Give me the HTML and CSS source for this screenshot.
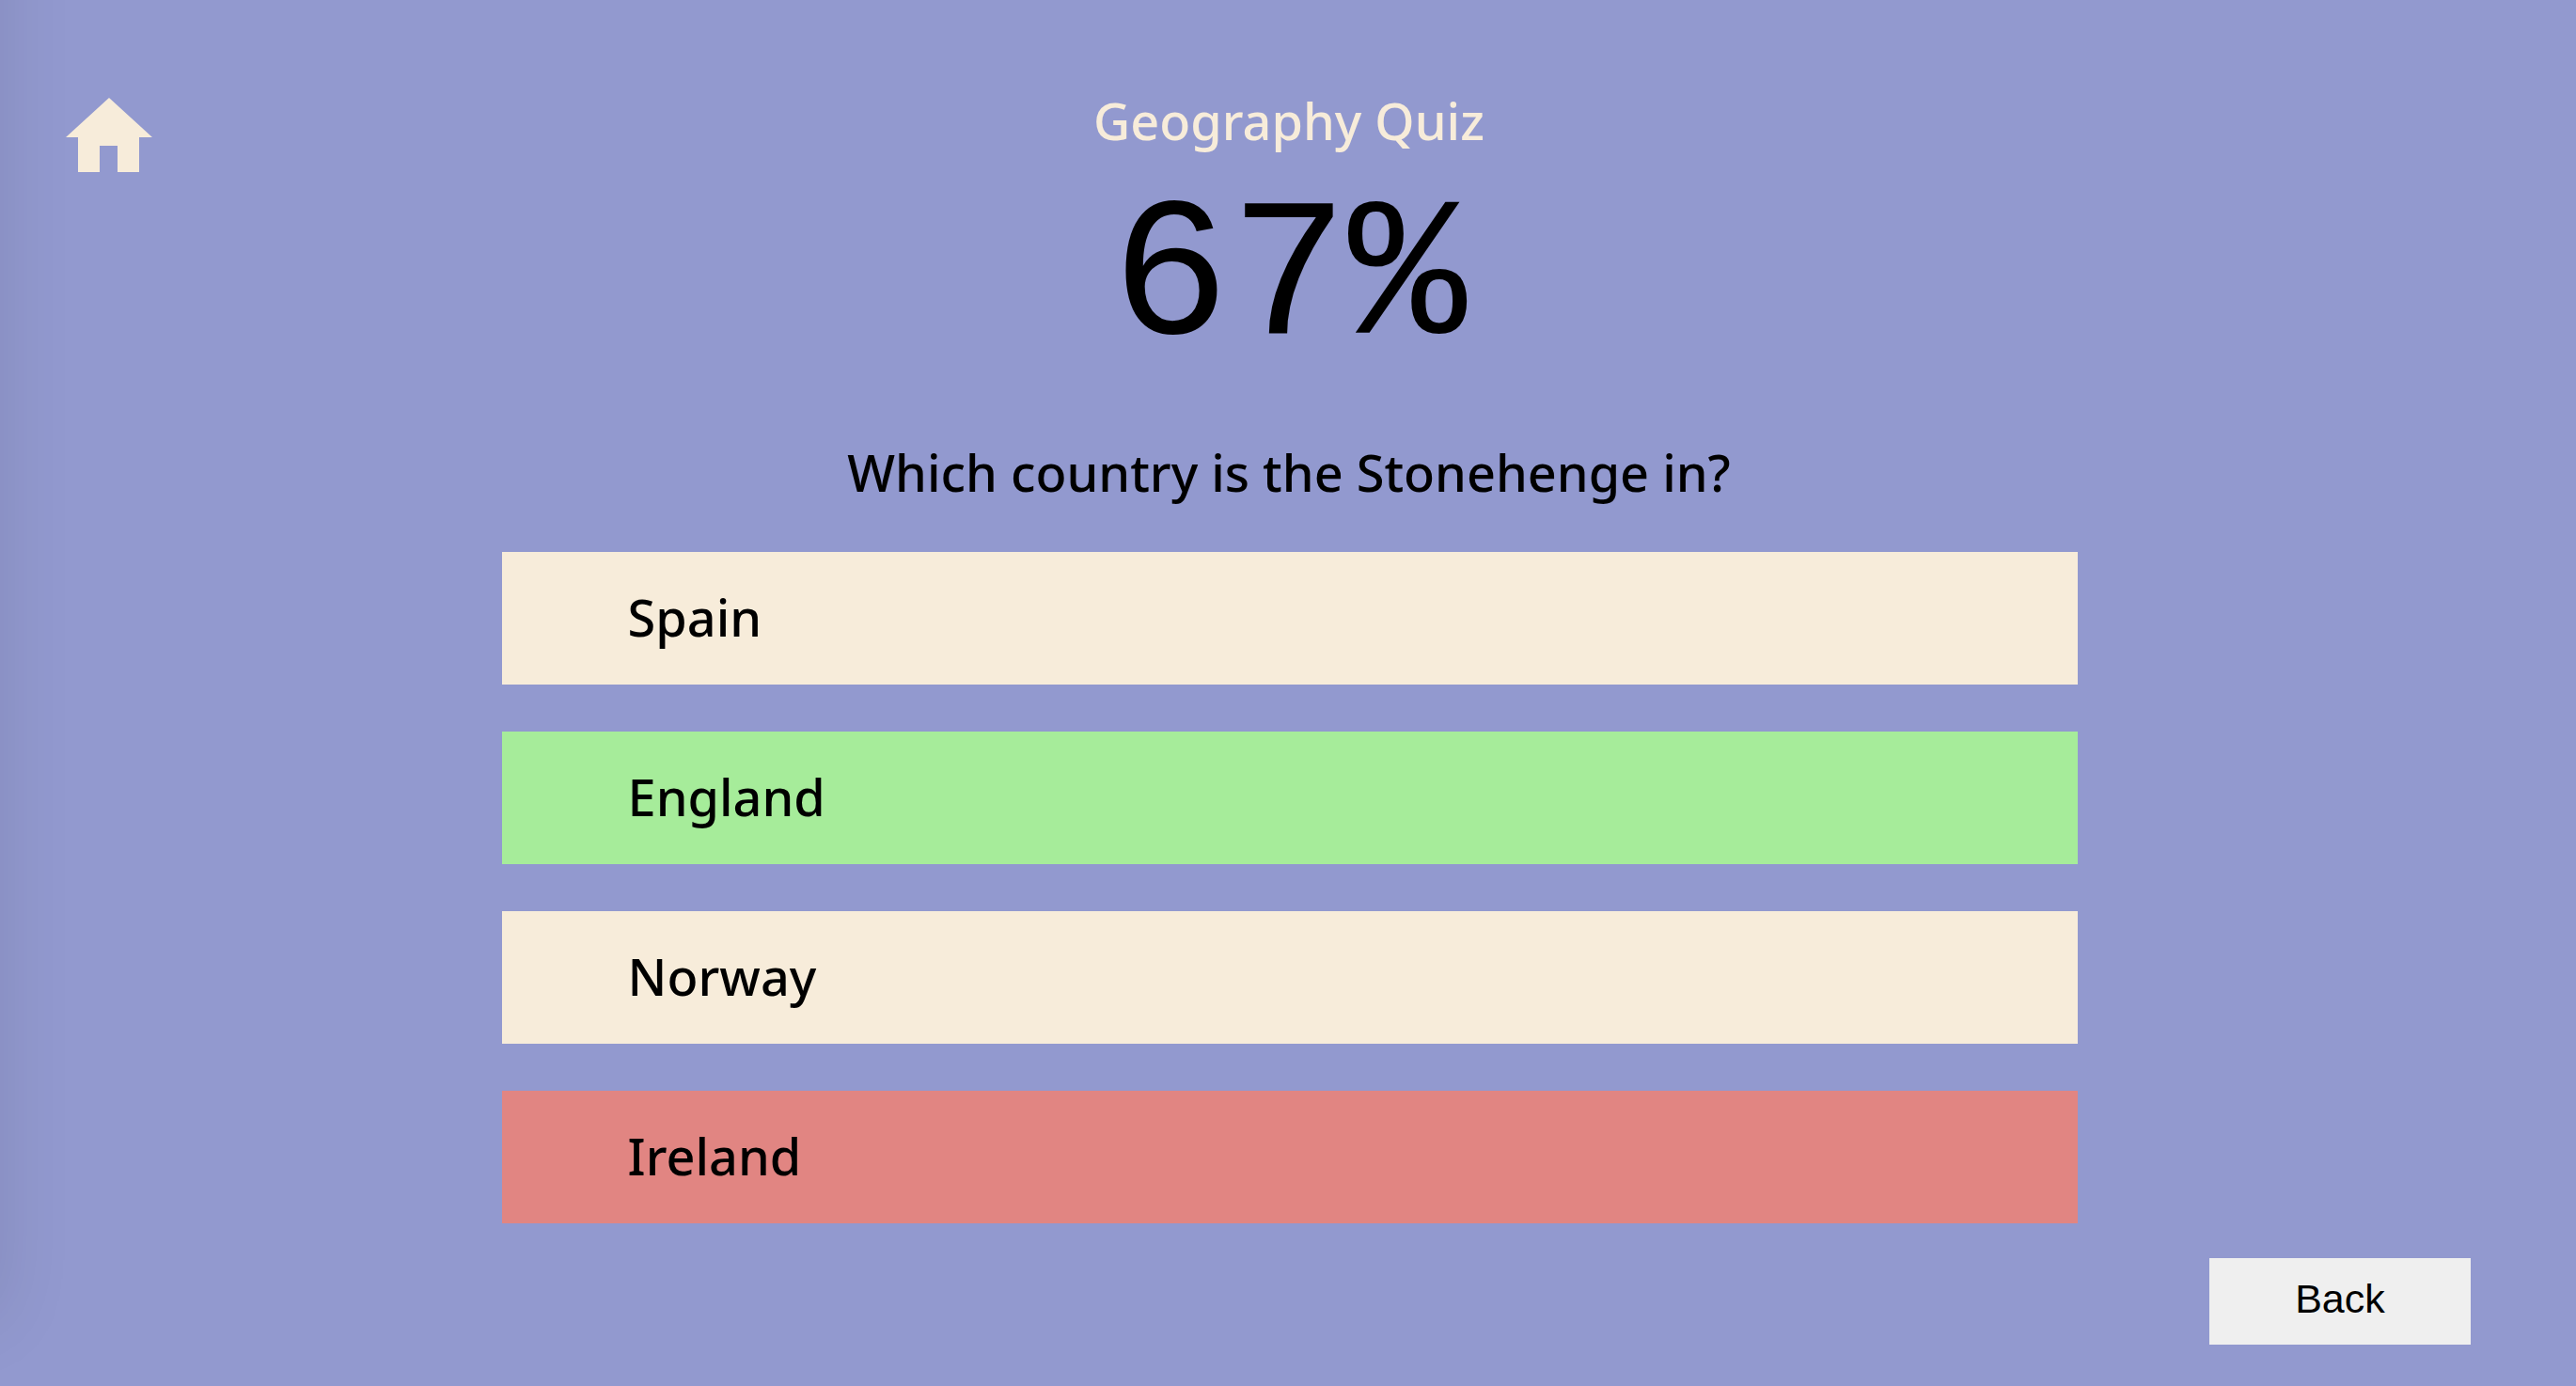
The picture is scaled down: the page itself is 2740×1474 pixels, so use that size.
FILE: index.html
```html
<!DOCTYPE html>
<html lang="en">
<head>
<meta charset="utf-8">
<meta name="viewport" content="width=device-width, initial-scale=1">
<title>Geography Quiz</title>
<link rel="stylesheet" href="styles.css">
</head>
<body>
<main class="quiz">
  <header class="top">
    <a class="home" href="#" aria-label="Home"><svg viewBox="0 0 92 80" aria-hidden="true"><path d="M46 0 92 42H78V79H55V51H36V79H13V42H0Z"/></svg></a>
    <div class="heading">
      <h1 class="title">Geography Quiz</h1>
      <p class="score">67%</p>
    </div>
  </header>
  <section class="question">
    <h2 class="prompt">Which country is the Stonehenge in?</h2>
    <ul class="answers">
      <li class="answer">Spain</li>
      <li class="answer correct">England</li>
      <li class="answer">Norway</li>
      <li class="answer wrong">Ireland</li>
    </ul>
  </section>
  <footer class="actions"><button class="back" type="button">Back</button></footer>
</main>
</body>
</html>
```
FILE: styles.css
```css
* { box-sizing: border-box; }
body { margin: 0; min-height: 100vh; background: #9299cf; color: #000; font-family: "Noto Sans", sans-serif; }
.quiz { position: relative; min-height: 100vh; overflow: hidden; }
/* Soft shadow along the left edge of the page */
.quiz::before { content: ""; position: absolute; top: -100px; bottom: 74px; left: -200px; width: 200px; box-shadow: 0 0 80px rgba(0, 0, 0, .1); pointer-events: none; }
.top { display: grid; grid-template-columns: 1fr auto 1fr; padding: 96px 68px 0 70px; }
.home { width: 92px; height: 80px; margin-top: 8px; }
.home svg { display: block; width: 92px; height: 80px; fill: #f7ecda; }
.heading { text-align: center; }
.title { margin: 0; font-size: 54px; line-height: 64px; font-weight: 500; color: #f7ecda; }
.score { margin: 22px 0 0; font-family: "Liberation Mono", monospace; font-size: 210px; line-height: 232px; }
.question { width: 61.2%; margin: 56px auto 0; padding-left: 2px; }
.prompt { margin: 0 0 53px; font-size: 54px; line-height: 64px; font-weight: 500; text-align: center; }
.answers { display: grid; gap: 50px; margin: 0 -2px 0 0; padding: 0; list-style: none; }
.answer { padding: 0 134px 2px; font-size: 54px; line-height: 139px; font-weight: 500; background: #f7ecda; }
.correct { background: #a6ec9a; }
.wrong { background: #e18582; }
.actions { display: flex; justify-content: flex-end; padding: 37px 112px 0; }
.back { width: 278px; height: 92px; padding: 0 0 6px; border: 0; background: #efefef; font: 43px "Liberation Sans", Arial, sans-serif; color: #000; }
```
